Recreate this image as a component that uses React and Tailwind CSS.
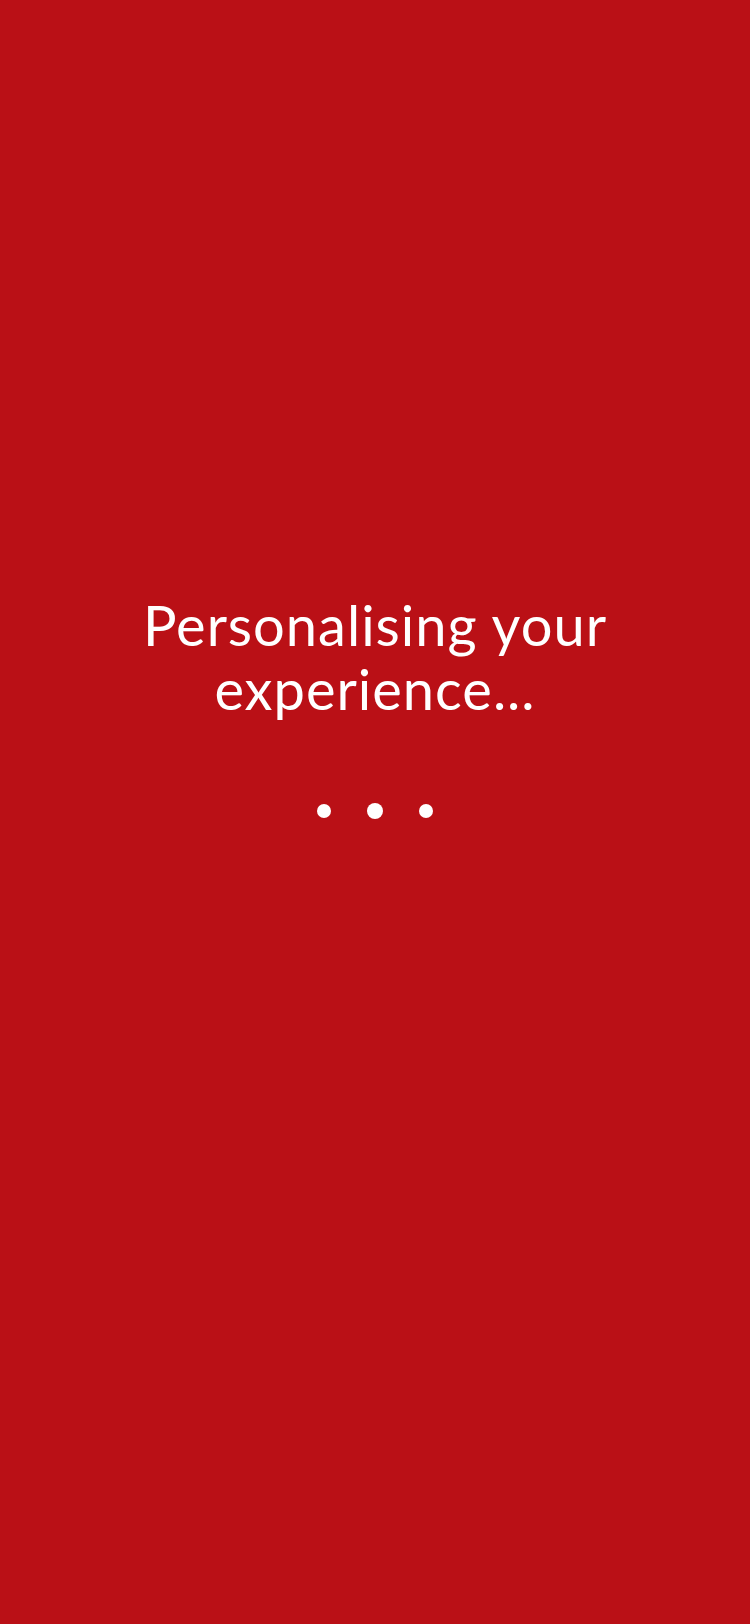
export default function App() {
  return (
    <div className="flex min-h-[1624px] w-full flex-col items-center bg-[#ba1016] pt-[593px] font-['Lato','Open_Sans',sans-serif] text-white">
      <h1 className="text-center text-[56px] font-normal leading-[64px] tracking-[1px]">
        Personalising your
        <br />
        experience...
      </h1>
      <div className="mt-[82px] flex items-center gap-[36px]">
        <span className="h-[14px] w-[14px] rounded-full bg-white" />
        <span className="h-[16px] w-[16px] rounded-full bg-white" />
        <span className="h-[14px] w-[14px] rounded-full bg-white" />
      </div>
    </div>
  );
}
